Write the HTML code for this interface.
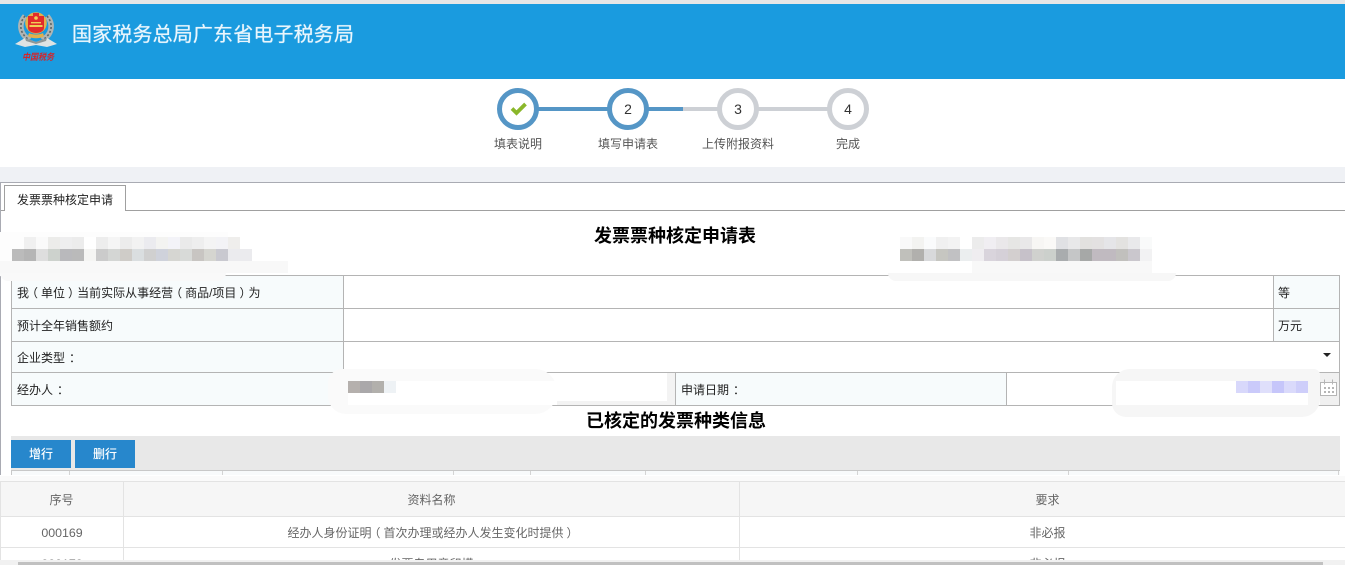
<!DOCTYPE html>
<html lang="zh-CN">
<head>
<meta charset="utf-8">
<title>发票票种核定申请</title>
<style>
html,body{margin:0;padding:0;width:1345px;height:565px;overflow:hidden;background:#fff}
body{position:relative;font-family:"Liberation Sans","Noto Sans CJK SC",sans-serif;font-size:12px;color:#222}
.a{position:absolute;box-sizing:border-box}
.t{position:absolute;white-space:nowrap;line-height:16px}
.c{text-align:center}
.circle{position:absolute;width:42px;height:42px;border-radius:50%;border:5px solid #5596c6;background:#fff;top:88px;box-sizing:border-box;text-align:center;line-height:32px;font-size:14px;color:#333}
.gray{border-color:#cdd0d5}
.lab{position:absolute;top:136px;width:120px;text-align:center;color:#555;line-height:16px}
.cell{position:absolute;background:#f7fbfc}
.h{position:absolute;background:#b4b4b4}
.m{position:absolute;display:flex;height:12px}
.m i{display:block;width:12px;height:12px;flex:none}
.btn{position:absolute;top:440px;height:28px;width:60px;background:#2787cc;color:#fff;text-align:center;line-height:28px;text-shadow:0 0 .4px #fff}
.title{position:absolute;font-size:18px;font-weight:bold;color:#000;line-height:24px;white-space:nowrap}
.lg{position:absolute;background:#e3e3e3}
.td{position:absolute;color:#666;text-align:center;line-height:16px;white-space:nowrap}
.l{position:relative;left:-3px}
.r{position:relative;left:3px}
.k{position:relative;left:4px}
</style>
</head>
<body>
<!-- header -->
<div class="a" style="left:0;top:0;width:1345px;height:4px;background:#e6e6e6"></div>
<div class="a" style="left:0;top:4px;width:1345px;height:75px;background:#1a9bdf"></div>
<svg class="a" style="left:0;top:0" width="70" height="70" viewBox="0 0 70 70">
  <path d="M25 16C18 24 20 35 30 40" fill="none" stroke="#aeb5b5" stroke-width="5.5"/>
  <path d="M47 16C54 24 52 35 42 40" fill="none" stroke="#aeb5b5" stroke-width="5.5"/>
  <path d="M25 16C18 24 20 35 30 40M47 16C54 24 52 35 42 40" fill="none" stroke="#5c6665" stroke-width="1.6" stroke-dasharray="2 2"/>
  <circle cx="36" cy="23" r="10.8" fill="#e3b04a"/>
  <path d="M28 16h16v12c0 3-4 5-8 5s-8-2-8-5z" fill="#e22b2a"/>
  <path d="M33 13h6v3h-6z" fill="#e22b2a"/>
  <circle cx="36" cy="18" r="1.8" fill="#f0ce55"/>
  <path d="M31 22h10v1.4H31zM29.5 25h13v2h-13z" fill="#f0ce55"/>
  <path d="M29 33c3 2 11 2 14 0l1 3c-4 3-12 3-16 0z" fill="#e3b04a"/>
  <path d="M15 44l10-6 11 4 11-4 10 6-10 3-11-2-11 2z" fill="#dfe3e3"/>
  <path d="M25 38l11 4 11-4-1 3-10 3-10-3z" fill="#8f9797"/>
  <text x="22" y="60" font-size="9" font-weight="bold" fill="#d4242a" textLength="32" lengthAdjust="spacingAndGlyphs" font-style="italic" font-family="'Noto Sans CJK SC',sans-serif">中国税务</text>
</svg>
<div class="t" style="left:72px;top:21px;font-size:20px;line-height:28px;color:#eaf6fd;letter-spacing:.15px;text-shadow:0 0 .7px #eaf6fd">国家税务总局广东省电子税务局</div>

<!-- steps -->
<div class="a" style="left:518px;top:107px;width:165px;height:4px;background:#5596c6"></div>
<div class="a" style="left:683px;top:107px;width:165px;height:4px;background:#cdd0d5"></div>
<div class="circle" style="left:497px"></div>
<svg class="a" style="left:510px;top:101px" width="17" height="15" viewBox="0 0 17 15"><path d="M2 7.5L6.5 12 15.5 3" fill="none" stroke="#8ab72a" stroke-width="3.8"/></svg>
<div class="circle" style="left:607px">2</div>
<div class="circle gray" style="left:717px">3</div>
<div class="circle gray" style="left:827px">4</div>
<div class="lab" style="left:458px">填表说明</div>
<div class="lab" style="left:568px">填写申请表</div>
<div class="lab" style="left:678px">上传附报资料</div>
<div class="lab" style="left:788px">完成</div>

<!-- gray band -->
<div class="a" style="left:0;top:167px;width:1345px;height:15px;background:#eff1f5"></div>
<div class="a" style="left:0;top:182px;width:1345px;height:1px;background:#a9abb3"></div>
<div class="a" style="left:0;top:182px;width:1px;height:293px;background:#a9abb3"></div>

<!-- tab -->
<div class="a" style="left:1px;top:210px;width:1344px;height:1px;background:#a0a0a0"></div>
<div class="a" style="left:4px;top:185px;width:122px;height:26px;border:1px solid #a0a0a0;border-bottom:0;background:#fff"></div>
<div class="t" style="left:17px;top:192px;color:#222">发票票种核定申请</div>

<div class="title" style="left:594px;top:224px">发票票种核定申请表</div>

<!-- table -->
<div class="cell" style="left:11px;top:275px;width:332px;height:130px"></div>
<div class="cell" style="left:1273px;top:275px;width:66px;height:66px"></div>
<div class="cell" style="left:675px;top:372px;width:332px;height:33px"></div>
<div class="a" style="left:1007px;top:373px;width:332px;height:32px;background:#fff"></div>
<div class="a" style="left:557px;top:401px;width:118px;height:4px;background:#f3f3f3"></div>
<div class="a" style="left:667px;top:373px;width:8px;height:32px;background:#f3f3f3"></div>
<div class="a" style="left:1320px;top:373px;width:19px;height:32px;background:#f0f0f0"></div>
<div class="h" style="left:11px;top:275px;width:1329px;height:1px"></div>
<div class="h" style="left:11px;top:308px;width:1329px;height:1px"></div>
<div class="h" style="left:11px;top:341px;width:1329px;height:1px"></div>
<div class="h" style="left:11px;top:372px;width:1329px;height:1px"></div>
<div class="h" style="left:11px;top:405px;width:1329px;height:1px"></div>
<div class="h" style="left:11px;top:275px;width:1px;height:131px"></div>
<div class="h" style="left:1339px;top:275px;width:1px;height:131px"></div>
<div class="h" style="left:343px;top:275px;width:1px;height:130px"></div>
<div class="h" style="left:1273px;top:275px;width:1px;height:66px"></div>
<div class="h" style="left:675px;top:372px;width:1px;height:33px"></div>
<div class="h" style="left:1006px;top:372px;width:1px;height:33px"></div>

<div class="t" style="left:17px;top:285px">我<span class="l">（</span>单位<span class="r">）</span>当前实际从事经营<span class="l">（</span>商品/项目<span class="r">）</span>为</div>
<div class="t" style="left:17px;top:318px">预计全年销售额约</div>
<div class="t" style="left:17px;top:350px">企业类型<span class="k">：</span></div>
<div class="t" style="left:17px;top:382px">经办人<span class="k">：</span></div>
<div class="t" style="left:681px;top:382px">申请日期<span class="k">：</span></div>
<div class="t" style="left:1278px;top:285px">等</div>
<div class="t" style="left:1278px;top:318px">万元</div>
<div class="a" style="left:1323px;top:353px;width:0;height:0;border-left:4px solid transparent;border-right:4px solid transparent;border-top:4px solid #222"></div>

<!-- redaction patches -->
<div class="a" style="left:0;top:232px;width:228px;height:44px;background:#fdfdfd;border-radius:0 0 20px 0"></div>
<div class="a" style="left:0;top:261px;width:288px;height:12px;background:#f8f8f8"></div>
<div class="a" style="left:0;top:273px;width:226px;height:8px;background:#f9f9f9;border-radius:0 0 14px 14px"></div>
<div class="m" style="left:24px;top:237px"><i style="background:#f0f0f0"></i><i style="background:#fafafa"></i><i style="background:#ececea"></i><i style="background:#eeeeef"></i><i style="background:#ececec"></i><i style="background:#fff"></i><i style="background:#ededed"></i><i style="background:#f5f5f5"></i><i style="background:#ececec"></i><i style="background:#f2f2f2"></i><i style="background:#ebebef"></i><i style="background:#f3f3f1"></i><i style="background:#f3f3f8"></i><i style="background:#eaeaea"></i><i style="background:#eeeeee"></i><i style="background:#f4f4f4"></i><i style="background:#f3f3f6"></i><i style="background:#efeeec"></i></div>
<div class="m" style="left:12px;top:249px"><i style="background:#bbbbbb"></i><i style="background:#b5b5b5"></i><i style="background:#dedede"></i><i style="background:#cdd2cd"></i><i style="background:#b9b9bc"></i><i style="background:#bababa"></i><i style="background:#f5f5f3"></i><i style="background:#cbcbcb"></i><i style="background:#d4d6d4"></i><i style="background:#cfccc8"></i><i style="background:#dadee0"></i><i style="background:#d0d0d0"></i><i style="background:#cfd2db"></i><i style="background:#d6d6d2"></i><i style="background:#d8dad8"></i><i style="background:#c8c5c2"></i><i style="background:#d5d5d0"></i><i style="background:#c9c9d0"></i><i style="background:#ebebee"></i><i style="background:#ebebee"></i></div>

<div class="a" style="left:888px;top:273px;width:288px;height:8px;background:#f7f7f7;border-radius:0 0 12px 12px"></div>
<div class="a" style="left:972px;top:261px;width:180px;height:12px;background:#f8f8f8"></div>
<div class="m" style="left:900px;top:237px"><i style="background:#f9f9f9"></i><i style="background:#f3f3f1"></i><i style="background:#fafbfc"></i><i style="background:#f0f0f0"></i><i style="background:#f3f3f3"></i><i style="background:#fff"></i><i style="background:#ececec"></i><i style="background:#f0eef2"></i><i style="background:#eae8ea"></i><i style="background:#e6e6e4"></i><i style="background:#e9e8e9"></i><i style="background:#f7f6f4"></i><i style="background:#faf9f7"></i><i style="background:#e0e1e4"></i><i style="background:#e8e8e9"></i><i style="background:#e2e1df"></i><i style="background:#e3e1e1"></i><i style="background:#e5e5e8"></i><i style="background:#e3e2e0"></i><i style="background:#e9e9eb"></i><i style="background:#f9fafa"></i></div>
<div class="m" style="left:900px;top:249px"><i style="background:#c0c0bb"></i><i style="background:#b1b0ad"></i><i style="background:#d8d9db"></i><i style="background:#c6c6c1"></i><i style="background:#c1c1c3"></i><i style="background:#ebeeef"></i><i style="background:#efedf0"></i><i style="background:#d9d4dc"></i><i style="background:#d5d0d8"></i><i style="background:#d3cfcf"></i><i style="background:#c6c1c9"></i><i style="background:#d0d1ce"></i><i style="background:#ccd0cc"></i><i style="background:#a9acae"></i><i style="background:#c5c6c7"></i><i style="background:#a6a8a7"></i><i style="background:#c0bac0"></i><i style="background:#c0bac0"></i><i style="background:#c1c0bd"></i><i style="background:#cac7cd"></i><i style="background:#f2f2f3"></i></div>

<div class="a" style="left:328px;top:369px;width:229px;height:45px;background:#fafafa;border-radius:14px 22px 22px 18px"></div>
<div class="a" style="left:557px;top:373px;width:110px;height:28px;background:#fff"></div>
<div class="a" style="left:348px;top:381px;width:209px;height:24px;background:#fff"></div>
<div class="m" style="left:348px;top:381px"><i style="background:#b5b0ad"></i><i style="background:#aaa8aa"></i><i style="background:#b2b0ac"></i><i style="background:#eef2f5"></i></div>

<div class="a" style="left:1112px;top:369px;width:208px;height:48px;background:#f6f6f6;border-radius:18px 6px 18px 14px"></div>
<div class="a" style="left:1116px;top:381px;width:192px;height:24px;background:#fff"></div>
<div class="m" style="left:1236px;top:381px"><i style="background:#d8d8fb"></i><i style="background:#cacafa"></i><i style="background:#dfdffb"></i><i style="background:#c6c6fa"></i><i style="background:#dadafb"></i><i style="background:#cecefa"></i></div>
<svg class="a" style="left:1320px;top:379px" width="17" height="18" viewBox="0 0 17 18">
  <rect x="0.5" y="3.5" width="16" height="13" fill="#fff" stroke="#b5b5b5"/>
  <path d="M4.5 0.5v5M12.5 0.5v5" stroke="#b5b5b5" stroke-width="1"/>
  <path d="M4 8h2v2H4zM8 8h2v2H8zM12 8h2v2h-2zM4 12h2v2H4zM8 12h2v2H8zM12 12h2v2h-2z" fill="#b5b5b5"/>
</svg>

<div class="title" style="left:586px;top:409px">已核定的发票种类信息</div>

<!-- toolbar -->
<div class="a" style="left:11px;top:436px;width:1329px;height:34px;background:#e8e8e8"></div>
<div class="a" style="left:11px;top:470px;width:1329px;height:1px;background:#c8c8c8"></div>
<div class="btn" style="left:11px">增行</div>
<div class="btn" style="left:75px">删行</div>
<div class="a" style="left:11px;top:471px;width:1329px;height:5px;background:#f8fafb"></div>
<div class="a" style="left:11px;top:471px;width:1px;height:5px;background:#c8c8c8"></div>
<div class="a" style="left:69px;top:471px;width:1px;height:5px;background:#d4d4d4"></div>
<div class="a" style="left:222px;top:471px;width:1px;height:5px;background:#d4d4d4"></div>
<div class="a" style="left:453px;top:471px;width:1px;height:5px;background:#d4d4d4"></div>
<div class="a" style="left:530px;top:471px;width:1px;height:5px;background:#d4d4d4"></div>
<div class="a" style="left:645px;top:471px;width:1px;height:5px;background:#d4d4d4"></div>
<div class="a" style="left:857px;top:471px;width:1px;height:5px;background:#d4d4d4"></div>
<div class="a" style="left:1068px;top:471px;width:1px;height:5px;background:#d4d4d4"></div>
<div class="a" style="left:1338px;top:471px;width:1px;height:5px;background:#d4d4d4"></div>

<!-- bottom table -->
<div class="a" style="left:0;top:475px;width:1345px;height:90px;background:#fff;overflow:hidden">
  <div class="a" style="left:0;top:1px;width:1345px;height:5px;background:#fafafa"></div>
  <div class="a" style="left:0;top:6px;width:1345px;height:35px;background:#f6f6f6"></div>
  <div class="lg" style="left:0;top:6px;width:1345px;height:1px"></div>
  <div class="lg" style="left:0;top:41px;width:1345px;height:1px"></div>
  <div class="lg" style="left:0;top:72px;width:1345px;height:1px"></div>
  <div class="lg" style="left:0;top:6px;width:1px;height:79px"></div>
  <div class="lg" style="left:123px;top:6px;width:1px;height:79px"></div>
  <div class="lg" style="left:739px;top:6px;width:1px;height:79px"></div>
  <div class="td" style="left:0;top:17px;width:123px">序号</div>
  <div class="td" style="left:124px;top:17px;width:615px">资料名称</div>
  <div class="td" style="left:740px;top:17px;width:615px">要求</div>
  <div class="td" style="left:0;top:50px;width:124px;font-size:12.4px">000169</div>
  <div class="td" style="left:124px;top:50px;width:615px">经办人身份证明<span class="l">（</span>首次办理或经办人发生变化时提供<span class="r">）</span></div>
  <div class="td" style="left:740px;top:50px;width:615px">非必报</div>
  <div class="td" style="left:0;top:81px;width:124px;font-size:12.4px">000170</div>
  <div class="td" style="left:124px;top:81px;width:615px">发票专用章印模</div>
  <div class="td" style="left:740px;top:81px;width:615px">非必报</div>
  <div class="a" style="left:0;top:85px;width:1345px;height:5px;background:#f1f1f1"></div>
  <div class="a" style="left:18px;top:87px;width:1305px;height:3px;background:#c1c1c1"></div>
</div>
</body>
</html>
